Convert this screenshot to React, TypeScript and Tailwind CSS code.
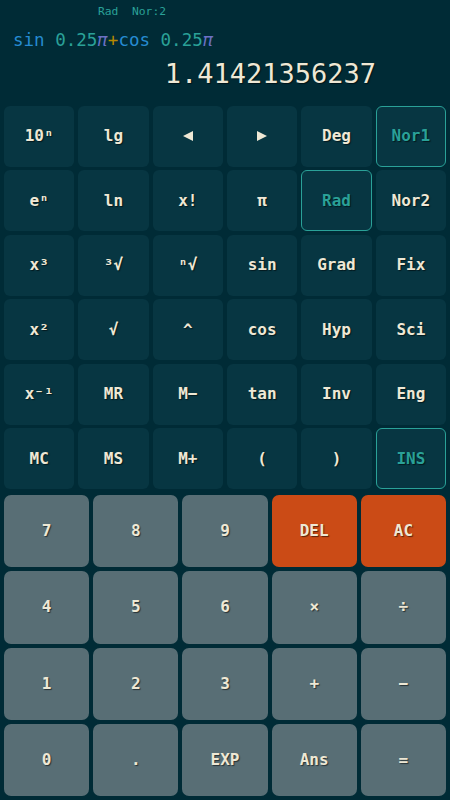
import React from "react"

type Key = { label: React.ReactNode; active?: boolean }

const font = "font-['DejaVu_Sans_Mono','Liberation_Mono',monospace]"

function TriLeft() {
  return (
    <svg width="10" height="10" viewBox="0 0 10 10">
      <path d="M10 0 L10 10 L0 5 Z" fill="#eee8d5" />
    </svg>
  )
}

function TriRight() {
  return (
    <svg width="10" height="10" viewBox="0 0 10 10">
      <path d="M0 0 L0 10 L10 5 Z" fill="#eee8d5" />
    </svg>
  )
}

const upperKeys: Key[] = [
  { label: "10ⁿ" },
  { label: "lg" },
  { label: <TriLeft /> },
  { label: <TriRight /> },
  { label: "Deg" },
  { label: "Nor1", active: true },
  { label: "eⁿ" },
  { label: "ln" },
  { label: "x!" },
  { label: "π" },
  { label: "Rad", active: true },
  { label: "Nor2" },
  { label: "x³" },
  { label: "³√" },
  { label: "ⁿ√" },
  { label: "sin" },
  { label: "Grad" },
  { label: "Fix" },
  { label: "x²" },
  { label: "√" },
  { label: "^" },
  { label: "cos" },
  { label: "Hyp" },
  { label: "Sci" },
  { label: "x⁻¹" },
  { label: "MR" },
  { label: "M−" },
  { label: "tan" },
  { label: "Inv" },
  { label: "Eng" },
  { label: "MC" },
  { label: "MS" },
  { label: "M+" },
  { label: "(" },
  { label: ")" },
  { label: "INS", active: true },
]

const lowerKeys: { label: string; orange?: boolean }[] = [
  { label: "7" },
  { label: "8" },
  { label: "9" },
  { label: "DEL", orange: true },
  { label: "AC", orange: true },
  { label: "4" },
  { label: "5" },
  { label: "6" },
  { label: "×" },
  { label: "÷" },
  { label: "1" },
  { label: "2" },
  { label: "3" },
  { label: "+" },
  { label: "−" },
  { label: "0" },
  { label: "." },
  { label: "EXP" },
  { label: "Ans" },
  { label: "=" },
]

const shadow = "[text-shadow:1px_1px_1px_rgba(0,0,0,0.55)]"

export default function App() {
  return (
    <div className={`w-[450px] h-[800px] bg-[#002b36] flex flex-col ${font}`}>
      {/* display */}
      <div className="h-[106px] flex flex-col">
        <div className="pt-[5px] pl-[98px] text-[11.3px] leading-[14px] text-[#2aa198] whitespace-pre">
          Rad  Nor:2
        </div>
        <div className="mt-[10px] pl-[13px] text-[17.5px] leading-[22px] whitespace-pre">
          <span className="text-[#268bd2]">sin </span>
          <span className="text-[#2aa198]">0.25</span>
          <span className="text-[#6c71c4] italic">π</span>
          <span className="text-[#b58900]">+</span>
          <span className="text-[#268bd2]">cos </span>
          <span className="text-[#2aa198]">0.25</span>
          <span className="text-[#6c71c4] italic">π</span>
        </div>
        <div className={`mt-[7px] pr-[74px] text-right text-[27px] leading-[32px] text-[#eee8d5] ${shadow}`}>
          1.41421356237
        </div>
      </div>

      {/* scientific keys */}
      <div className="h-[383px] px-1 grid grid-cols-6 grid-rows-6 gap-x-1 gap-y-[3.5px]">
        {upperKeys.map((k, i) => (
          <div
            key={i}
            className={`rounded-md bg-[#073642] flex items-center justify-center text-[16px] font-bold ${shadow} ${
              k.active ? "border-[1.5px] border-[#2aa198] text-[#2aa198]" : "text-[#eee8d5]"
            }`}
          >
            {k.label}
          </div>
        ))}
      </div>

      {/* number keys */}
      <div className="mt-[6px] h-[301px] px-1 grid grid-cols-5 grid-rows-4 gap-1">
        {lowerKeys.map((k, i) => (
          <div
            key={i}
            className={`rounded-[7px] flex items-center justify-center text-[16px] font-bold text-[#eee8d5] ${shadow} ${
              k.orange ? "bg-[#cb4b16]" : "bg-[#586e75]"
            }`}
          >
            {k.label}
          </div>
        ))}
      </div>
    </div>
  )
}
